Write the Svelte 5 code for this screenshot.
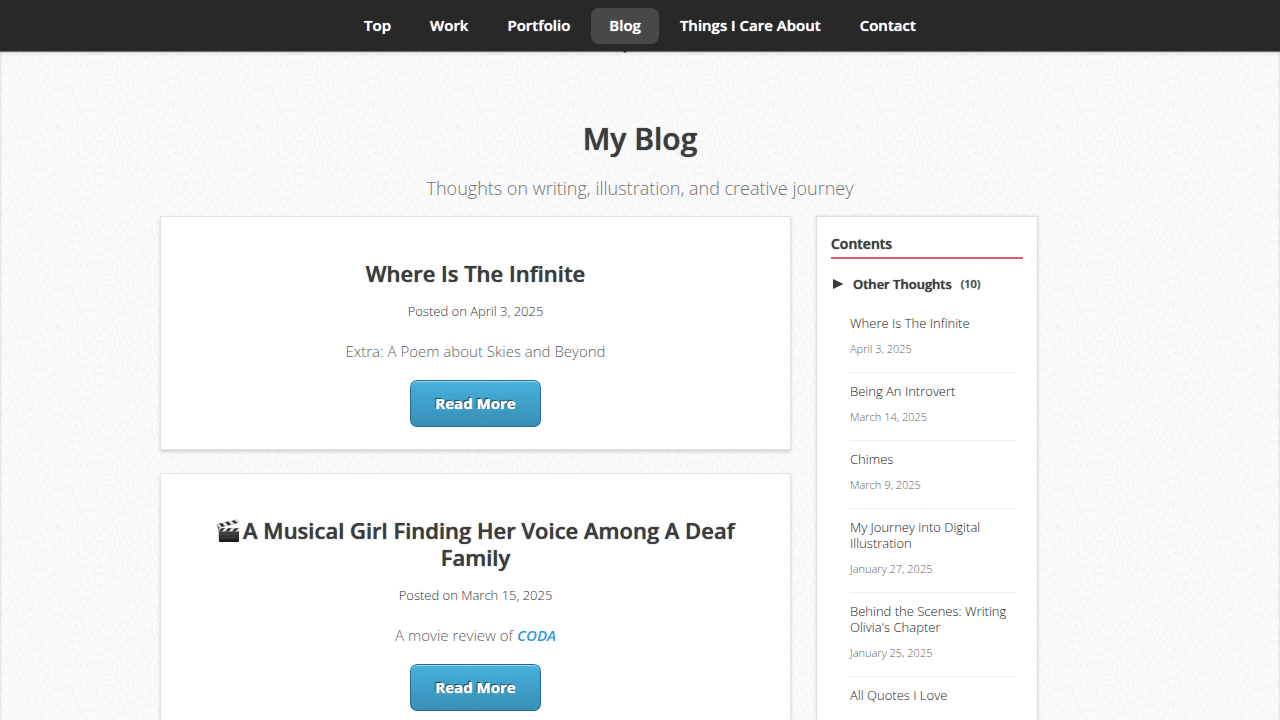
<script>
  const nav = ['Top', 'Work', 'Portfolio', 'Blog', 'Things I Care About', 'Contact'];
  const current = 'Blog';
  const contents = [
    { title: 'Where Is The Infinite', date: 'April 3, 2025' },
    { title: 'Being An Introvert', date: 'March 14, 2025' },
    { title: 'Chimes', date: 'March 9, 2025' },
    { title: 'My Journey into Digital Illustration', date: 'January 27, 2025' },
    { title: "Behind the Scenes: Writing Olivia's Chapter", date: 'January 25, 2025' },
    { title: 'All Quotes I Love' }
  ];
</script>

<nav class="bar" aria-label="Main">
  {#each nav as item}
    <a href="#top" class:active={item === current} aria-current={item === current ? 'page' : undefined}>{item}</a>
  {/each}
</nav>

<div class="page">
  <header>
    <h1>My Blog</h1>
    <p>Thoughts on writing, illustration, and creative journey</p>
  </header>
  <div class="columns">
    <main>
      <article>
        <h2>Where Is The Infinite</h2>
        <p class="posted">Posted on April 3, 2025</p>
        <p class="summary">Extra: A Poem about Skies and Beyond</p>
        <a class="button" href="#infinite">Read More</a>
      </article>
      <article>
        <h2>
          <svg class="clapper" viewBox="0 0 24 24" aria-hidden="true">
            <defs>
              <linearGradient id="slate" x1="0" y1="0" x2="0" y2="1">
                <stop offset="0" stop-color="#454545" />
                <stop offset="1" stop-color="#171717" />
              </linearGradient>
            </defs>
            <path d="M1 5.2 21.8.5l1 3.2L2 8.8z" fill="#e9e9e9" stroke="#999" stroke-width=".4" />
            <path d="m3 4.8 3-.7 3 3-3.2.8zm6.3-1.5 3-.7 3 3-3.2.8zm6.3-1.4 3-.7 3 2.8-3.2.8z" fill="#343434" />
            <path d="M2.5 9.2H23v3.4H2.5z" fill="#e9e9e9" stroke="#999" stroke-width=".4" />
            <path d="M5.5 9.2H9l-3.2 3.4H2.5zm6.7 0h3.5l-3.2 3.4H9zm6.7 0h3.5l-3.2 3.4h-3.5z" fill="#303030" />
            <path d="M2.8 12.5H23V22q0 1-1 1H3.8Q3 23 2.9 22z" fill="url(#slate)" />
            <path d="M4 15.5h17.5M4 18.8h17.5" stroke="#5a5a5a" stroke-width=".5" />
            <path d="m1 5.2 2.8 3.6-1.3 2.7z" fill="#666" />
          </svg>
          A Musical Girl Finding Her Voice Among A Deaf Family
        </h2>
        <p class="posted">Posted on March 15, 2025</p>
        <p class="summary">A movie review of <a class="film" href="#coda">CODA</a></p>
        <a class="button" href="#musical">Read More</a>
      </article>
    </main>
    <aside>
      <h3>Contents</h3>
      <button class="group" type="button">
        <svg viewBox="0 0 12 12" aria-hidden="true"><path d="M1 1 11.5 6 1 11z" fill="#3c3c3c" /></svg>
        <span>Other Thoughts</span><small>(10)</small>
      </button>
      <ul>
        {#each contents as entry}
          <li>
            <a href="#entry">{entry.title}</a>
            {#if entry.date}<time>{entry.date}</time>{/if}
          </li>
        {/each}
      </ul>
    </aside>
  </div>
</div>

<style>
  :global(body) {
    --grain: url("data:image/svg+xml,%3Csvg xmlns='http://www.w3.org/2000/svg' width='200' height='200'%3E%3Cfilter id='n' x='0' y='0' width='100%25' height='100%25'%3E%3CfeTurbulence type='fractalNoise' baseFrequency='.5 .25' numOctaves='2' stitchTiles='stitch'/%3E%3CfeColorMatrix values='0 0 0 0 .4 0 0 0 0 .4 0 0 0 0 .4 .25 0 0 0 -.09'/%3E%3C/filter%3E%3Crect width='200' height='200' filter='url(%23n)'/%3E%3C/svg%3E");
    background: #fcfcfc var(--grain);
    box-shadow: inset 0 0 3px rgba(0, 0, 0, 0.2);
    font-family: 'Open Sans', sans-serif;
    font-weight: 300;
    color: #3c3c3c;
  }
  h1, h2, h3, p, ul { margin: 0; padding: 0; }
  a { color: inherit; text-decoration: none; }

  .bar {
    position: sticky;
    top: 0;
    display: flex;
    justify-content: center;
    gap: 3px;
    padding: 8px 0 7px;
    background: #282828;
    box-shadow: 0 1px 1px rgba(0, 0, 0, 0.5), 0 2px 4px rgba(0, 0, 0, 0.12);
  }
  .bar a {
    position: relative;
    padding: 0 18px 2px;
    border-radius: 8px;
    font-size: 15px;
    font-weight: 600;
    line-height: 34px;
    color: #fff;
    text-shadow: 0 0 1px currentColor;
  }
  .bar a.active { background: #484848; }
  .bar a.active::after {
    content: '';
    position: absolute;
    left: 50%;
    top: 100%;
    margin-left: -9px;
    border: 9px solid transparent;
    border-top-color: #282828;
    border-bottom: 0;
  }

  .page {
    box-sizing: border-box;
    max-width: 960px;
    margin: 0 auto;
    padding-top: 64px;
  }
  header { text-align: center; }
  h1 { font-size: 30px; line-height: 48px; font-weight: 600; }
  header p {
    padding: 8px 0 11px;
    font-size: 18px;
    line-height: 34px;
    color: #707070;
    text-shadow: 0 1px 0 #fff;
  }
  h1, h2, h3, .group { text-shadow: 0 0 1px currentColor; }

  .columns {
    display: grid;
    grid-template-columns: minmax(0, 1fr) 222px;
    gap: 25px;
    align-items: start;
    padding-right: 82px;
  }
  main { display: grid; gap: 23px; }
  article, aside {
    box-sizing: border-box;
    background: #fff;
    border: 1px solid #e2e2e2;
  }
  article {
    padding: 43px 50px 22px;
    text-align: center;
    box-shadow: 0 2px 3px rgba(0, 0, 0, 0.15);
  }
  h2 { font-size: 22px; line-height: 27px; font-weight: 600; }
  .clapper { width: 24px; height: 24px; margin-right: -3px; vertical-align: -4px; }
  .posted { padding: 12px 0; font-size: 13px; line-height: 24px; color: #333; }
  .summary { padding: 2px 0 15px; font-size: 15px; line-height: 28px; color: #606060; }
  .film { font-weight: 600; font-style: italic; color: #3498db; }
  .button {
    display: inline-block;
    box-sizing: border-box;
    padding: 0 25px;
    border-radius: 7px;
    font-size: 15px;
    line-height: 47px;
    font-weight: 700;
    color: #fff;
    text-shadow: 0 0 1px #fff, -1px -1px 1px rgba(0, 40, 60, 0.9);
    background: var(--grain), linear-gradient(#43b3e0, #338cb5);
    box-shadow: inset 0 0 0 1px #286d8c, inset 0 2px 1px rgba(255, 255, 255, 0.5);
    vertical-align: top;
  }

  aside { padding: 14px; border: 1px solid #dcdcdc; box-shadow: 0 0 3px rgba(0, 0, 0, 0.12); }
  h3 {
    border-bottom: 2px solid #e4566e;
    font-size: 14px;
    line-height: 26px;
    font-weight: 600;
  }
  .group {
    display: flex;
    align-items: center;
    margin: 12px 0;
    padding: 0;
    border: 0;
    background: none;
    font: 600 13px/26px 'Open Sans', sans-serif;
    color: #3c3c3c;
  }
  .group svg { width: 12px; height: 12px; margin: 0 9px 0 1px; }
  .group small { margin-left: 9px; font-size: 11px; color: #555; }
  ul { list-style: none; padding: 0 7px 0 19px; }
  li { padding: 10px 0 13px; border-bottom: 1px solid #eee; }
  li:first-child { padding-top: 6px; }
  li:last-child { border-bottom: 0; }
  li a { display: block; font-size: 13px; line-height: 16px; color: #222; }
  li time { display: block; padding-top: 8px; font-size: 11px; line-height: 20px; color: #606060; }
</style>
